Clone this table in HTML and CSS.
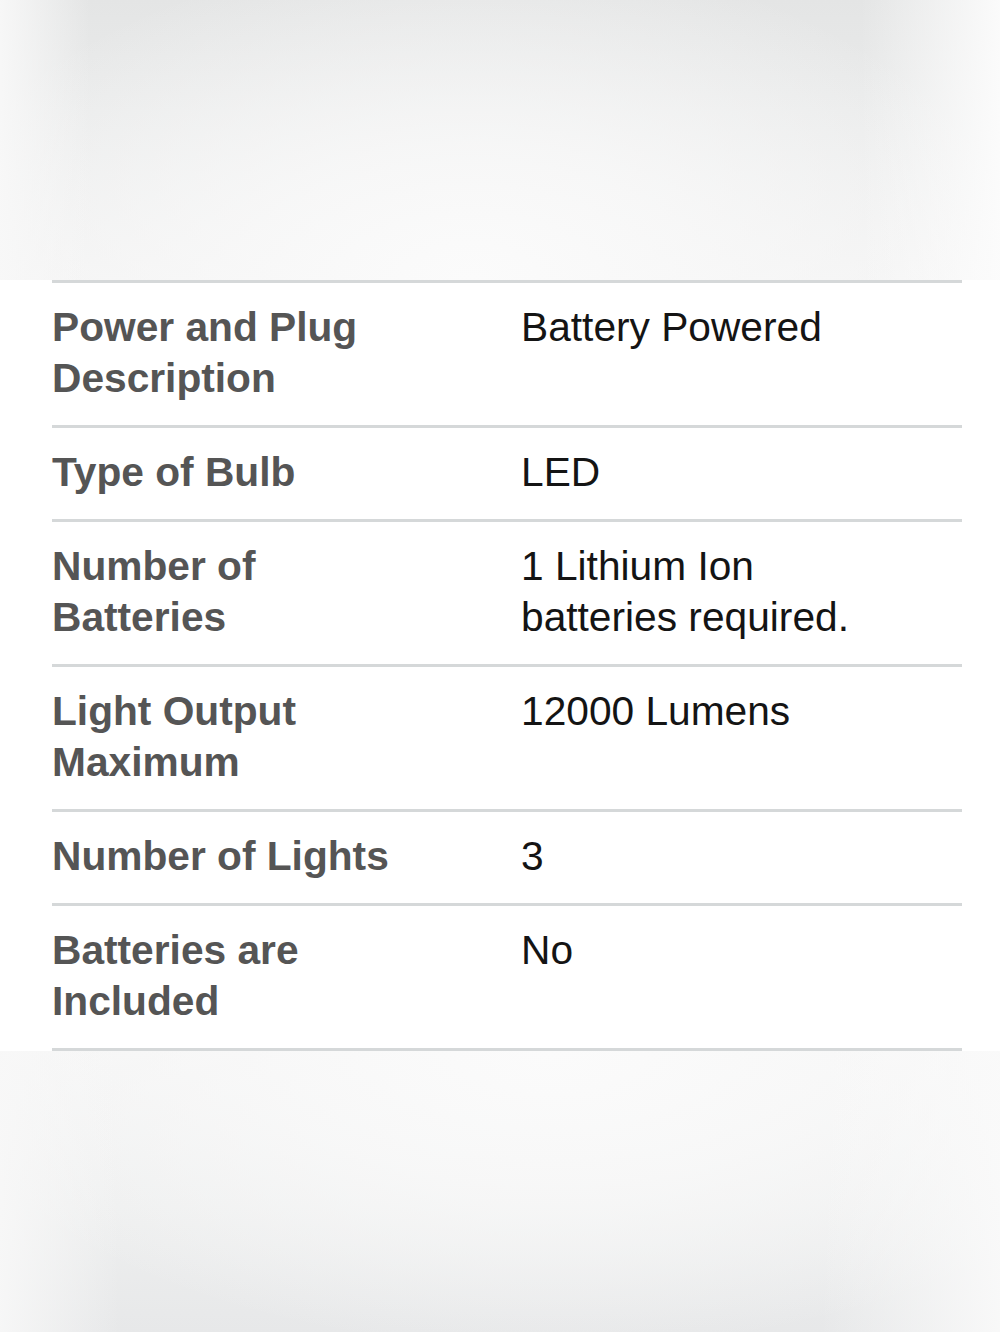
FILE: index.html
```html
<!DOCTYPE html>
<html lang="en">
<head>
<meta charset="utf-8">
<title>Specifications</title>
<link rel="stylesheet" href="styles.css">
</head>
<body>
<div class="backdrop backdrop-top"></div>
<section class="sheet">
  <dl class="specs">
    <div class="row">
      <dt class="label">Power and Plug Description</dt>
      <dd class="value">Battery Powered</dd>
    </div>
    <div class="row">
      <dt class="label">Type of Bulb</dt>
      <dd class="value">LED</dd>
    </div>
    <div class="row">
      <dt class="label">Number of Batteries</dt>
      <dd class="value">1 Lithium Ion batteries required.</dd>
    </div>
    <div class="row">
      <dt class="label">Light Output Maximum</dt>
      <dd class="value">12000 Lumens</dd>
    </div>
    <div class="row">
      <dt class="label">Number of Lights</dt>
      <dd class="value">3</dd>
    </div>
    <div class="row">
      <dt class="label">Batteries are Included</dt>
      <dd class="value">No</dd>
    </div>
  </dl>
</section>
<div class="backdrop backdrop-bottom"></div>
</body>
</html>
```

FILE: styles.css
```css
html, body {
  margin: 0;
  padding: 0;
  background: #ffffff;
}

body {
  width: 1000px;
  font-family: "Liberation Sans", Arial, sans-serif;
}

.backdrop-top {
  height: 280px;
  background:
    linear-gradient(to right, rgba(248,248,248,0.95) 0%, rgba(246,246,246,0) 9%, rgba(246,246,246,0) 86%, rgba(252,252,252,0.95) 100%),
    radial-gradient(ellipse 560px 330px at 47% 100%, rgba(251,251,251,1) 0%, rgba(249,249,249,0.8) 40%, rgba(245,245,245,0) 100%),
    linear-gradient(to bottom, #e4e5e5 0%, #eaebeb 40%, #f3f3f3 100%);
}

.backdrop-bottom {
  height: 281px;
  background:
    linear-gradient(to right, rgba(248,248,248,0.9) 0%, rgba(246,246,246,0) 12%, rgba(246,246,246,0) 82%, rgba(250,250,250,0.9) 100%),
    radial-gradient(ellipse 620px 300px at 55% 0%, rgba(251,251,251,1) 0%, rgba(249,249,249,0.8) 45%, rgba(245,245,245,0) 100%),
    linear-gradient(to bottom, #f5f5f5 0%, #eeefef 55%, #e7e8e9 100%);
}

.sheet {
  background: #ffffff;
  padding: 0 38px 0 52px;
}

.specs {
  margin: 0;
  border-top: 3px solid #d5d8d9;
}

.row {
  display: grid;
  grid-template-columns: 470px 1fr;
  padding: 19px 0 21px;
  border-bottom: 3px solid #d5d8d9;
}

.label {
  margin: 0;
  max-width: 370px;
  font-weight: bold;
  font-size: 40.7px;
  line-height: 51px;
  color: #555555;
}

.value {
  margin: 0 0 0 -1px;
  max-width: 380px;
  font-size: 40.7px;
  line-height: 51px;
  color: #141414;
}
```
